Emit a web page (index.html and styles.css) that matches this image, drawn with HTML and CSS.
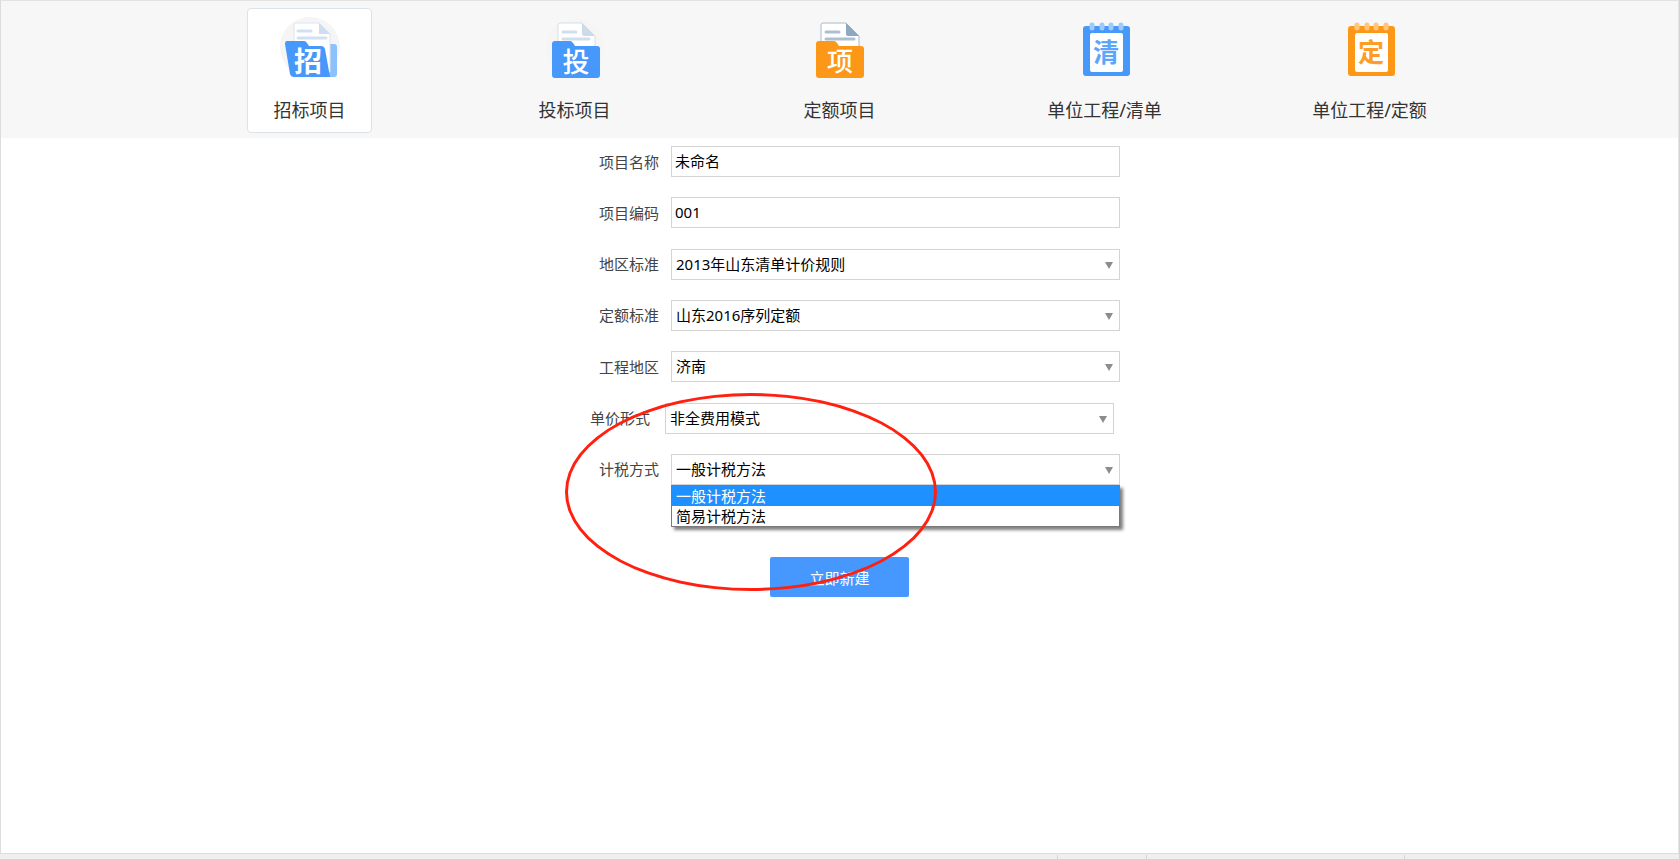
FILE: index.html
```html
<!DOCTYPE html>
<html lang="zh-CN">
<head>
<meta charset="utf-8">
<title>新建项目</title>
<link rel="stylesheet" href="styles.css">
</head>
<body>
<div class="page">
  <header class="header">
    <nav class="tabs">
      <button type="button" class="tab tab-active">
        <svg class="tab-icon" viewBox="0 -1 60 60" aria-hidden="true">
          <circle cx="30" cy="28" r="30" fill="#f5f5f5"/>
          <path d="M45 25h9q3 0 3 3v27q0 3-3 3H45z" fill="#8cc2fb"/>
          <path d="M16 4h23l11 11v38H14V6q0-2 2-2z" fill="#fff" stroke="#dbe5f1"/>
          <path d="M39 4l11 11H39z" fill="#cfddec"/>
          <path d="M18 12h13M18 19h28" stroke="#d3e0f0" stroke-width="3" stroke-linecap="round"/>
          <path d="M7 22h17q2 0 3 2l2 3h12q3 0 4 3l5 28H14q-3 0-4-3L5 25q0-3 2-3z" fill="#4698fb"/>
          <text class="glyph" x="28" y="53" font-size="28" fill="#fff">招</text>
        </svg>
        <span>招标项目</span>
      </button>
      <button type="button" class="tab">
        <svg class="tab-icon" viewBox="0 0 60 60" aria-hidden="true">
          <circle cx="30" cy="30" r="29" fill="#f5f5f5"/>
          <path d="M15 5h22l13 13v30H13V7q0-2 2-2z" fill="#fff" stroke="#d3dfec"/>
          <path d="M37 5l13 13H39q-2 0-2-2z" fill="#cddbe9"/>
          <path d="M18 14h13M18 21h26" stroke="#d0deed" stroke-width="3" stroke-linecap="round"/>
          <path d="M10 23h15q2 0 3 2l2 3h22q3 0 3 3v26q0 3-3 3H10q-3 0-3-3V26q0-3 3-3z" fill="#4698fb"/>
          <text class="glyph glyph-medium" x="31" y="54" font-size="27" fill="#fff">投</text>
        </svg>
        <span>投标项目</span>
      </button>
      <button type="button" class="tab">
        <svg class="tab-icon" viewBox="0 0 60 60" aria-hidden="true">
          <path d="M13 5h23l13 13v30H11V7q0-2 2-2z" fill="#fff" stroke="#a4bacf"/>
          <path d="M36 5l13 13H38q-2 0-2-2z" fill="#8ea8c3"/>
          <path d="M16 14h13M16 21h28" stroke="#acbfd3" stroke-width="3" stroke-linecap="round"/>
          <path d="M9 23h15q2 0 3 2l2 3h22q3 0 3 3v26q0 3-3 3H9q-3 0-3-3V26q0-3 3-3z" fill="#fc9718"/>
          <text class="glyph glyph-medium" x="30" y="53" font-size="26" fill="#fff">项</text>
        </svg>
        <span>定额项目</span>
      </button>
      <button type="button" class="tab">
        <svg class="tab-icon" viewBox="0 0 60 60" aria-hidden="true">
          <rect x="8" y="8" width="47" height="50" rx="3" fill="#4698fb"/>
          <rect x="15" y="15" width="33" height="39" rx="2" fill="#fff"/>
          <path d="M17 7v3M27 7v3M36 7v3M46 7v3" stroke="#9ccbfc" stroke-width="5" stroke-linecap="round"/>
          <text class="glyph" x="31" y="44" font-size="26" fill="#5ba6fc">清</text>
        </svg>
        <span>单位工程/清单</span>
      </button>
      <button type="button" class="tab">
        <svg class="tab-icon" viewBox="0 0 60 60" aria-hidden="true">
          <rect x="8" y="8" width="47" height="50" rx="3" fill="#fc9718"/>
          <rect x="15" y="15" width="33" height="39" rx="2" fill="#fff"/>
          <path d="M17 7v3M27 7v3M36 7v3M46 7v3" stroke="#ffc57d" stroke-width="5" stroke-linecap="round"/>
          <text class="glyph" x="31" y="44" font-size="26" fill="#fc9d25">定</text>
        </svg>
        <span>单位工程/定额</span>
      </button>
    </nav>
  </header>

  <main class="main">
    <form class="form">
      <div class="fields">
        <div class="row">
          <label class="label" for="name">项目名称</label>
          <div class="field"><input class="control" id="name" type="text" value="未命名"></div>
        </div>
        <div class="row">
          <label class="label" for="code">项目编码</label>
          <div class="field"><input class="control" id="code" type="text" value="001"></div>
        </div>
        <div class="row">
          <label class="label" for="region-standard">地区标准</label>
          <div class="field field-select">
            <select class="control" id="region-standard"><option>2013年山东清单计价规则</option></select>
          </div>
        </div>
        <div class="row">
          <label class="label" for="quota-standard">定额标准</label>
          <div class="field field-select">
            <select class="control" id="quota-standard"><option>山东2016序列定额</option></select>
          </div>
        </div>
        <div class="row">
          <label class="label" for="area">工程地区</label>
          <div class="field field-select">
            <select class="control" id="area"><option>济南</option></select>
          </div>
        </div>
        <div class="row row-price">
          <label class="label" for="price">单价形式</label>
          <div class="field field-select">
            <select class="control" id="price"><option>非全费用模式</option></select>
          </div>
        </div>
        <div class="row">
          <label class="label" for="tax">计税方式</label>
          <div class="field field-select">
            <select class="control" id="tax"><option>一般计税方法</option><option>简易计税方法</option></select>
            <ul class="menu" role="listbox" aria-label="计税方式">
              <li class="option option-selected" role="option" aria-selected="true">一般计税方法</li>
              <li class="option" role="option" aria-selected="false">简易计税方法</li>
            </ul>
          </div>
        </div>
      </div>
      <button class="submit" type="button">立即新建</button>
      <div class="highlight" aria-hidden="true"></div>
    </form>
  </main>

  <footer class="status">
    <span class="status-cell status-main"></span>
    <span class="status-cell status-small"></span>
    <span class="status-cell status-medium"></span>
    <span class="status-rest"></span>
  </footer>
</div>
</body>
</html>
```
FILE: styles.css
```css
* {
  box-sizing: border-box;
}

body {
  margin: 0;
  background: #fff;
  color: #000;
  font-family: "Noto Sans", "Noto Sans CJK SC", sans-serif;
  font-size: 15px;
}

button,
input,
select {
  font: inherit;
  color: inherit;
}

.page {
  display: flex;
  flex-direction: column;
  min-height: 100vh;
}

.header {
  padding: 7px 16px 5px;
  border-top: 1px solid #e3e3e3;
  border-left: 1px solid #dcdcdc;
  border-right: 1px solid #e3e3e3;
  background: #f7f7f7;
}

.tabs {
  display: grid;
  grid-template-columns: repeat(5, 1fr);
  justify-items: center;
  max-width: 1325px;
  margin: 0 auto;
}

.tab {
  display: flex;
  flex-direction: column;
  align-items: center;
  gap: 20px;
  width: 125px;
  height: 125px;
  padding: 9px 0 0;
  border: 1px solid transparent;
  border-radius: 4px;
  background: none;
  color: #333;
  font-size: 18px;
  line-height: 24px;
  white-space: nowrap;
}

.tab-active {
  border-color: #dce3e8;
  background: #fff;
}

.tab-icon {
  width: 60px;
  height: 60px;
  overflow: visible;
}

.glyph {
  font-family: "Noto Sans CJK SC", sans-serif;
  font-weight: 700;
  text-anchor: middle;
}

.glyph-medium {
  font-weight: 500;
}

.main {
  flex: 1;
  padding: 8px 16px;
  border-left: 1px solid #dcdcdc;
  border-right: 1px solid #e3e3e3;
}

.form {
  position: relative;
  display: flex;
  flex-direction: column;
  align-items: center;
  gap: 72px;
  max-width: 561px;
  margin: 0 auto;
}

.fields {
  display: flex;
  flex-direction: column;
  align-items: center;
  justify-content: space-between;
  width: 100%;
  min-height: 339px;
}

.row {
  display: flex;
  align-items: center;
  gap: 12px;
  width: 100%;
}

.row-price {
  gap: 15px;
  width: calc(100% + 3px);
  margin-right: 15px;
}

.label {
  flex: 0 0 100px;
  color: #444;
  line-height: 24px;
  text-align: right;
}

.field {
  position: relative;
  flex: 1;
}

.control {
  display: block;
  width: 100%;
  height: 31px;
  padding: 0 3px 2px;
  border: 1px solid #d4d4d4;
  border-radius: 0;
  background: #fff;
  outline: none;
  appearance: none;
}

.field-select .control {
  padding: 0 24px 1px 4px;
}

.field-select::after {
  content: "";
  position: absolute;
  top: 13px;
  right: 7px;
  border: 4px solid transparent;
  border-top: 7px solid #8c8c8c;
  border-bottom: 0;
  pointer-events: none;
}

.menu {
  position: absolute;
  top: 100%;
  left: 0;
  right: 0;
  margin: 0;
  padding: 0;
  border: 1px solid #7a7a7a;
  background: #fff;
  box-shadow: 3px 3px 3px rgba(0, 0, 0, 0.5);
  list-style: none;
}

.option {
  padding: 0 4px;
  line-height: 20px;
}

.option-selected {
  background: #1e90ff;
  color: #fff;
}

.submit {
  width: 139px;
  height: 40px;
  padding: 0;
  border: 0;
  border-radius: 2px;
  background: #4698ff;
  color: #fff;
}

/* Callout ring over the pricing and tax fields */
.highlight {
  position: absolute;
  top: 247px;
  left: 6px;
  width: 372px;
  height: 198px;
  border: 3px solid #ff2010;
  border-radius: 50%;
  pointer-events: none;
}

.status {
  display: flex;
  height: 6px;
  padding-top: 1px;
  border-top: 1px solid #dcdcdc;
  background: #efefef;
}

.status-cell {
  border-right: 1px solid #d4d4d4;
}

.status-main {
  flex: 1059;
}

.status-small {
  flex: 88;
}

.status-medium {
  flex: 257;
}

.status-rest {
  flex: 275;
}
```
